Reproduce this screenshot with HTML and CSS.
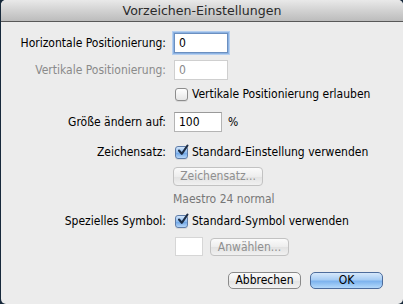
FILE: index.html
```html
<!DOCTYPE html>
<html lang="de">
<head>
  <meta charset="UTF-8">
  <title>Vorzeichen-Einstellungen</title>
  <link rel="stylesheet" href="styles.css">
</head>
<body>
  <div class="window">
    <!-- Title bar -->
    <div class="titlebar">Vorzeichen-Einstellungen</div>

    <div class="content">
      <div class="row row-input">
        <label class="label">Horizontale Positionierung:</label>
        <div class="field focused">0</div>
      </div>

      <div class="row row-input gap-7">
        <label class="label disabled">Vertikale Positionierung:</label>
        <div class="field field-disabled">0</div>
      </div>

      <div class="row row-check gap-7">
        <span class="label"></span>
        <span class="checkbox"></span>
        <span class="check-text">Vertikale Positionierung erlauben</span>
      </div>

      <div class="row row-input gap-11">
        <label class="label">Größe ändern auf:</label>
        <div class="field field-size">100</div>
        <span class="unit">%</span>
      </div>

      <div class="row row-check gap-13">
        <label class="label">Zeichensatz:</label>
        <span class="checkbox checked">
          <svg width="13" height="13" viewBox="0 0 13 13"><path d="M3 6.5 L5.8 9.8 L11.5 1.5" fill="none" stroke="#1c2c44" stroke-width="2.1" stroke-linecap="round" stroke-linejoin="round"/></svg>
        </span>
        <span class="check-text">Standard-Einstellung verwenden</span>
      </div>

      <div class="row row-button gap-8">
        <span class="label"></span>
        <button class="btn btn-disabled btn-font">Zeichensatz...</button>
      </div>

      <div class="row row-note gap-6">
        <span class="label"></span>
        <span class="note">Maestro 24 normal</span>
      </div>

      <div class="row row-check gap-8">
        <label class="label">Spezielles Symbol:</label>
        <span class="checkbox checked">
          <svg width="13" height="13" viewBox="0 0 13 13"><path d="M3 6.5 L5.8 9.8 L11.5 1.5" fill="none" stroke="#1c2c44" stroke-width="2.1" stroke-linecap="round" stroke-linejoin="round"/></svg>
        </span>
        <span class="check-text">Standard-Symbol verwenden</span>
      </div>

      <div class="row row-button gap-9">
        <span class="label"></span>
        <div class="symbol-box"></div>
        <button class="btn btn-disabled btn-pick">Anwählen...</button>
      </div>

      <!-- Dialog buttons -->
      <div class="actions">
        <button class="btn btn-cancel">Abbrechen</button>
        <button class="btn btn-ok">OK</button>
      </div>
    </div>
  </div>
</body>
</html>
```

FILE: styles.css
```css
* {
  margin: 0;
  padding: 0;
  box-sizing: border-box;
}

body {
  font-family: "DejaVu Sans Condensed", "DejaVu Sans", sans-serif;
  font-stretch: condensed;
  font-size: 12px;
  color: #000;
  background: #17293b;
  width: 403px;
  height: 304px;
  overflow: hidden;
}

.window {
  margin-left: 1px;
  width: 402px;
  height: 304px;
  background: #ececec;
  border-radius: 5px;
  overflow: hidden;
}

.titlebar {
  height: 22px;
  background: linear-gradient(#e9e9e9 0%, #d2d2d2 50%, #bcbcbc 100%);
  border-bottom: 1px solid #585858;
  text-align: center;
  font-family: "DejaVu Sans", sans-serif;
  font-stretch: normal;
  font-size: 12.6px;
  line-height: 21px;
  color: #2a2a2a;
}

.content {
  padding-top: 11px;
}

.row {
  display: flex;
  align-items: center;
}

.row-input { height: 20px; }
.row-check { height: 14px; }
.row-button { height: 19px; }
.row-note { height: 14px; }

.gap-6 { margin-top: 6px; }
.gap-7 { margin-top: 7px; }
.gap-8 { margin-top: 8px; }
.gap-9 { margin-top: 9px; }
.gap-11 { margin-top: 11px; }
.gap-13 { margin-top: 13px; }

.label {
  width: 165px;
  flex: none;
  text-align: right;
  margin-right: 8px;
}

.disabled {
  color: #8a8a8a;
}

.field {
  width: 54px;
  height: 20px;
  background: #fff;
  border: 1px solid #b4b4b4;
  border-top-color: #9a9a9a;
  padding-left: 4px;
  line-height: 18px;
}

.field.focused {
  border-color: #6b8fc0;
  box-shadow: 0 0 0 1px #8db3e2, 0 0 0 2px #b5cff0;
}

.field-disabled {
  color: #8a8a8a;
  border-color: #cfcfcf;
}

.field-size {
  width: 48px;
}

.unit {
  margin-left: 6px;
}

.checkbox {
  width: 13px;
  height: 13px;
  flex: none;
  margin-left: 1px;
  margin-right: 4px;
  border: 1px solid #8d8d8d;
  border-radius: 3px;
  background: linear-gradient(#ffffff, #e6e6e6);
  box-shadow: 0 1px 0 rgba(0,0,0,0.08);
  position: relative;
}

.checkbox.checked {
  border-color: #5e7ca8;
  background: linear-gradient(#d3e6fb 0%, #8dbbef 50%, #6fa6e6 55%, #b6d6f8 100%);
}

.checkbox svg {
  position: absolute;
  left: 0;
  top: -3px;
}

.check-text {
  white-space: nowrap;
}

.note {
  color: #777;
  margin-left: -1px;
}

.btn {
  font-family: inherit;
  font-stretch: condensed;
  font-size: 12px;
  height: 19px;
  padding: 0;
  line-height: 17px;
  border: 1px solid #a8a8a8;
  border-radius: 4px;
  background: linear-gradient(#fbfbfb, #ededed 50%, #e2e2e2 51%, #f1f1f1);
}

.btn-disabled {
  color: #8f8f8f;
  border-color: #c2c2c2;
}

.btn-font {
  width: 90px;
  margin-left: -1px;
}

.symbol-box {
  width: 28px;
  height: 19px;
  background: #fff;
  border: 1px solid #d6d6d6;
  margin-left: 1px;
}

.btn-pick {
  width: 79px;
  margin-left: 7px;
  height: 18px;
  line-height: 16px;
}

.actions {
  display: flex;
  justify-content: flex-end;
  gap: 9px;
  margin-top: 16px;
  padding-right: 20px;
}

.btn-cancel {
  width: 73px;
  height: 17px;
  line-height: 15px;
  color: #000;
  border-color: #8a8a8a;
  border-radius: 5px;
}

.btn-ok {
  width: 73px;
  height: 17px;
  line-height: 15px;
  color: #000;
  border-color: #4d6c9c;
  border-radius: 5px;
  background: linear-gradient(#d6e8fb 0%, #a8cdf4 45%, #7db3ee 55%, #b4d9fb 100%);
}
```
